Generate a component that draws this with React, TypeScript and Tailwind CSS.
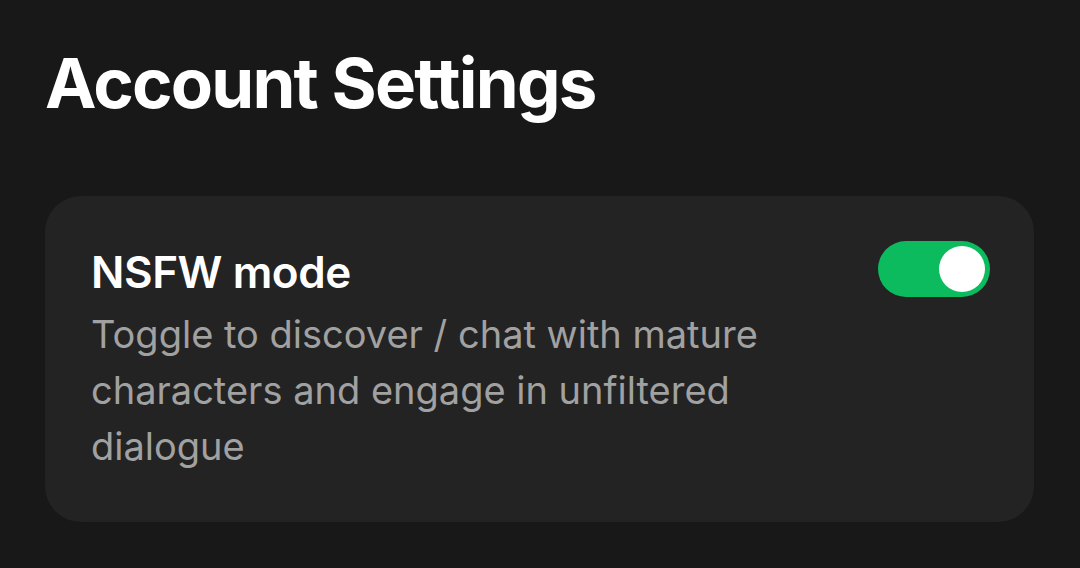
import React, { useState } from "react";

function App() {
  const [nsfw, setNsfw] = useState(true);

  return (
    <div
      className="min-h-screen w-full bg-[#181818] px-[45px] pt-[38px]"
      style={{ fontFamily: "Inter, 'Noto Sans', sans-serif" }}
    >
      <h1 className="text-[69px] font-bold leading-[90px] tracking-[-0.026em] text-white">
        Account Settings
      </h1>
      <div className="mt-[68px] flex w-[989px] items-start justify-between rounded-[36px] bg-[#232323] pl-[46px] pr-[44px] pt-[45px] pb-[48px]">
        <div className="flex flex-col pt-[2px]">
          <h2 className="text-[44px] font-semibold leading-[58px] tracking-[-0.01em] text-white">
            NSFW mode
          </h2>
          <p className="mt-[5px] w-[700px] text-[38px] leading-[56px] text-[#a1a1a1]">
            Toggle to discover / chat with mature characters and engage in
            unfiltered dialogue
          </p>
        </div>
        <button
          type="button"
          onClick={() => setNsfw(!nsfw)}
          className={
            "flex h-[56px] w-[112px] shrink-0 items-center rounded-full px-[5px] transition " +
            (nsfw ? "justify-end bg-[#0dbb5f]" : "justify-start bg-[#555555]")
          }
        >
          <span className="h-[46px] w-[46px] rounded-full bg-white" />
        </button>
      </div>
    </div>
  );
}

export default App;
